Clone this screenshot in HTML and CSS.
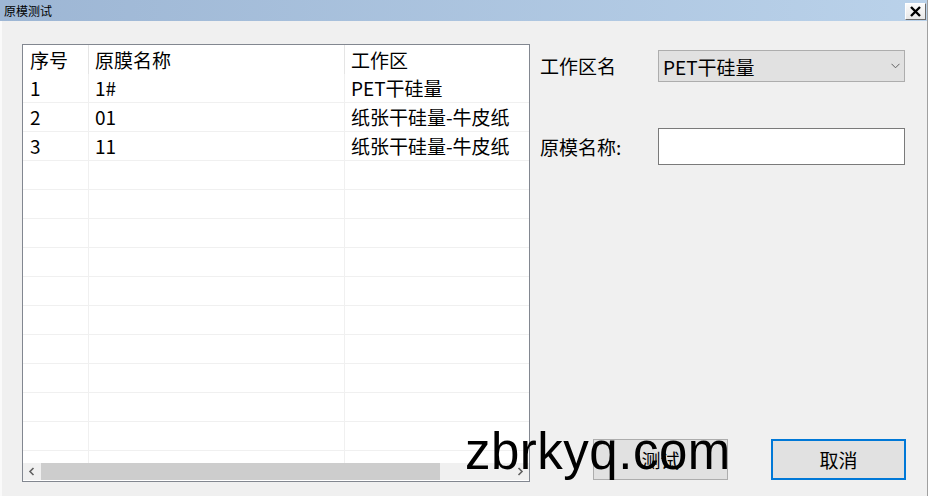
FILE: index.html
```html
<!DOCTYPE html>
<html lang="zh">
<head>
<meta charset="utf-8">
<title>原模测试</title>
<link rel="stylesheet" href="styles.css">
</head>
<body>
<div class="window">
  <div class="titlebar">
    <span class="title">原模测试</span>
    <button class="close" aria-label="关闭">
      <svg width="11" height="11" viewBox="0 0 11 11"><path d="M1 1 L10 10 M10 1 L1 10" stroke="#000" stroke-width="2.4" fill="none"/></svg>
    </button>
  </div>
  <div class="content">
    <div class="list">
      <div class="grid">
        <div class="row head">
          <div class="cell c1">序号</div>
          <div class="cell c2">原膜名称</div>
          <div class="cell c3">工作区</div>
        </div>
        <div class="row"><div class="cell c1">1</div><div class="cell c2">1#</div><div class="cell c3">PET干硅量</div></div>
        <div class="row"><div class="cell c1">2</div><div class="cell c2">01</div><div class="cell c3">纸张干硅量-牛皮纸</div></div>
        <div class="row"><div class="cell c1">3</div><div class="cell c2">11</div><div class="cell c3">纸张干硅量-牛皮纸</div></div>
        <div class="row"><div class="cell c1"></div><div class="cell c2"></div><div class="cell c3"></div></div>
        <div class="row"><div class="cell c1"></div><div class="cell c2"></div><div class="cell c3"></div></div>
        <div class="row"><div class="cell c1"></div><div class="cell c2"></div><div class="cell c3"></div></div>
        <div class="row"><div class="cell c1"></div><div class="cell c2"></div><div class="cell c3"></div></div>
        <div class="row"><div class="cell c1"></div><div class="cell c2"></div><div class="cell c3"></div></div>
        <div class="row"><div class="cell c1"></div><div class="cell c2"></div><div class="cell c3"></div></div>
        <div class="row"><div class="cell c1"></div><div class="cell c2"></div><div class="cell c3"></div></div>
        <div class="row"><div class="cell c1"></div><div class="cell c2"></div><div class="cell c3"></div></div>
        <div class="row"><div class="cell c1"></div><div class="cell c2"></div><div class="cell c3"></div></div>
        <div class="row"><div class="cell c1"></div><div class="cell c2"></div><div class="cell c3"></div></div>
        <div class="row"><div class="cell c1"></div><div class="cell c2"></div><div class="cell c3"></div></div>
      </div>
      <div class="hscroll">
        <div class="arrow">
          <svg width="7" height="9" viewBox="0 0 7 9"><path d="M5.5 1 L2 4.5 L5.5 8" stroke="#606060" stroke-width="1.6" fill="none"/></svg>
        </div>
        <div class="track"><div class="thumb"></div></div>
        <div class="arrow">
          <svg width="7" height="9" viewBox="0 0 7 9"><path d="M1.5 1 L5 4.5 L1.5 8" stroke="#606060" stroke-width="1.6" fill="none"/></svg>
        </div>
      </div>
    </div>
    <div class="panel">
      <div class="field first">
        <span class="label">工作区名</span>
        <div class="combo">
          <span>PET干硅量</span>
          <svg width="9" height="6" viewBox="0 0 9 6"><path d="M0.5 0.8 L4.5 4.8 L8.5 0.8" stroke="#606060" stroke-width="1" fill="none"/></svg>
        </div>
      </div>
      <div class="field second">
        <span class="label">原模名称:</span>
        <div class="input"></div>
      </div>
      <div class="buttons">
        <button class="btn">测试</button>
        <button class="btn default">取消</button>
      </div>
    </div>
    <div class="watermark">zbrkyq.com</div>
  </div>
</div>
</body>
</html>
```
FILE: styles.css
```css
html, body {
  margin: 0;
  padding: 0;
  width: 931px;
  height: 496px;
  overflow: hidden;
  background: #ffffff;
  font-family: "Noto Sans CJK SC", "Noto Sans", sans-serif;
}

.window {
  width: 928px;
  height: 496px;
  display: flex;
  flex-direction: column;
  border-right: 1px solid #a0a0a0;
  box-sizing: border-box;
  background: #f0f0f0;
}

.titlebar {
  height: 21px;
  flex: none;
  display: flex;
  align-items: center;
  justify-content: space-between;
  background: linear-gradient(to right, #9db6d4, #bad2ea);
  padding: 0 1px 0 4px;
}

.title {
  font-size: 12px;
  line-height: 21px;
  color: #000;
}

.close {
  width: 21px;
  height: 17px;
  margin-top: 1px;
  padding: 0;
  border: 1px solid;
  border-color: #fff #6a6a6a #6a6a6a #fff;
  background: linear-gradient(#fbfbfb, #e8e8e8);
  display: flex;
  align-items: center;
  justify-content: center;
}

.content {
  position: relative;
  flex: 1;
  display: flex;
  padding: 23px 0 0 22px;
  border-left: 2px solid #fafafa;
  box-sizing: border-box;
}

.list {
  width: 508px;
  height: 438px;
  box-sizing: border-box;
  border: 1px solid #828790;
  background: #fff;
  display: flex;
  flex-direction: column;
  margin-left: -2px;
}

.grid {
  flex: 1;
  overflow: hidden;
}

.row {
  display: flex;
  height: 29px;
  box-sizing: border-box;
  border-bottom: 1px solid #f0f0f0;
}

.row.head {
  border-bottom: none;
}

.cell {
  font-size: 19px;
  line-height: 28px;
  color: #000;
  white-space: nowrap;
  box-sizing: border-box;
  padding-left: 6px;
  overflow: hidden;
}

.c1 { width: 65px; padding-left: 7px; }
.c2 { width: 256px; border-left: 1px solid #f0f0f0; }
.c3 { flex: 1; border-left: 1px solid #f0f0f0; }

.row.head .cell { line-height: 30px; }
.row.head .c2, .row.head .c3 { border-left-color: #e5e5e5; }

.hscroll {
  height: 17px;
  flex: none;
  display: flex;
  background: #f0f0f0;
  margin-bottom: 1px;
}

.arrow {
  width: 17px;
  display: flex;
  align-items: center;
  justify-content: center;
}

.track {
  flex: 1;
  display: flex;
}

.thumb {
  width: 399px;
  height: 17px;
  margin-left: 1px;
  background: #cdcdcd;
}

.panel {
  flex: 1;
  display: flex;
  flex-direction: column;
  margin-left: 10px;
  padding-bottom: 16px;
}

.field {
  display: flex;
  align-items: center;
}

.field.first { margin-top: 6px; }
.field.second { margin-top: 46px; }

.label {
  width: 118px;
  font-size: 19px;
  line-height: 24px;
  color: #000;
}

.combo {
  width: 247px;
  height: 32px;
  box-sizing: border-box;
  border: 1px solid #adadad;
  background: #e1e1e1;
  display: flex;
  align-items: center;
  justify-content: space-between;
  padding: 0 4px 0 4px;
  font-size: 19px;
  color: #000;
}

.input {
  width: 247px;
  height: 37px;
  box-sizing: border-box;
  border: 1px solid #7a7a7a;
  background: #fff;
}

.buttons {
  margin-top: auto;
  display: flex;
  gap: 43px;
  margin-left: 53px;
}

.btn {
  width: 135px;
  height: 41px;
  box-sizing: border-box;
  border: 1px solid #adadad;
  background: #e1e1e1;
  font-family: "Noto Sans CJK SC", sans-serif;
  font-size: 19px;
  color: #000;
  padding: 0;
}

.btn.default {
  border: 2px solid #0078d7;
}

.watermark {
  position: absolute;
  left: 463px;
  top: 401px;
  font-family: "Liberation Sans", Arial, sans-serif;
  font-size: 51px;
  letter-spacing: 0.5px;
  line-height: 60px;
  color: #000;
  pointer-events: none;
}
```
